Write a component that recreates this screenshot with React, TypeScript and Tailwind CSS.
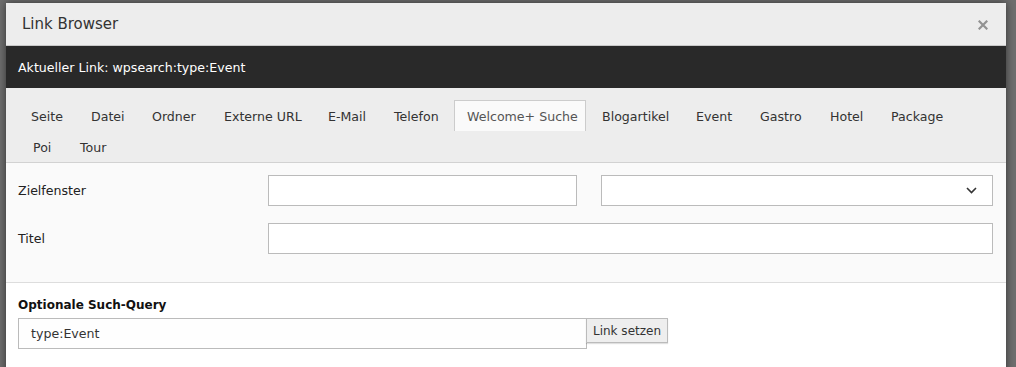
import React from "react";

const tabsRow1: [string, number][] = [
  ["Seite", 60],
  ["Datei", 61],
  ["Ordner", 72],
  ["Externe URL", 104],
  ["E-Mail", 66],
  ["Telefon", 73],
  ["Welcome+ Suche", 135],
  ["Blogartikel", 94],
  ["Event", 64],
  ["Gastro", 70],
  ["Hotel", 61],
  ["Package", 80],
];
const tabsRow2: [string, number][] = [
  ["Poi", 47],
  ["Tour", 60],
];

function Tab({ label, w, active }: { label: string; w: number; active?: boolean }) {
  if (active) {
    return (
      <div className="shrink-0 w-[135px] pr-[3px]">
        <div className="h-[31px] pl-[12px] pt-[3px] flex items-center bg-[#fafafa] border border-b-0 border-[#cccccc] text-[#555555] whitespace-nowrap">
          {label}
        </div>
      </div>
    );
  }
  return (
    <div
      className="shrink-0 h-[31px] pl-[13px] pt-[3px] flex items-center text-[#333333] whitespace-nowrap"
      style={{ width: w }}
    >
      {label}
    </div>
  );
}

export default function App() {
  return (
    <div
      className="relative w-[1016px] h-[367px] overflow-hidden bg-[#6e6e6e] pt-[3px] pl-[6px]"
      style={{ fontFamily: '"DejaVu Sans", Verdana, sans-serif' }}
    >
      <div className="w-[1000px] h-[400px] bg-white shadow-[0_0_8px_rgba(0,0,0,0.55)] flex flex-col">
        {/* Header */}
        <div className="h-[43px] bg-[#ededed] border-b border-[#c8c8c8] flex items-center justify-between pl-[16px] pr-[18px]">
          <span className="text-[15px] text-[#333333] pt-[1px]">Link Browser</span>
          <svg width="10" height="10" viewBox="0 0 10 10" className="mt-[1px]">
            <path d="M1.5 1.5 L8.5 8.5 M8.5 1.5 L1.5 8.5" stroke="#929292" strokeWidth="2.2" strokeLinecap="square" />
          </svg>
        </div>
        {/* Current link */}
        <div className="h-[42px] bg-[#292929] flex items-center pl-[12px] pt-[3px]">
          <span className="text-[12.6px] text-white">Aktueller Link: wpsearch:type:Event</span>
        </div>
        {/* Tabs */}
        <div className="bg-[#ededed] pt-[12px] pl-[12px] border-b border-[#d2d2d2] text-[12.6px]">
          <div className="flex">
            {tabsRow1.map(([t, w]) => (
              <Tab key={t} label={t} w={w} active={t === "Welcome+ Suche"} />
            ))}
          </div>
          <div className="flex pl-[2px]">
            {tabsRow2.map(([t, w]) => (
              <Tab key={t} label={t} w={w} />
            ))}
          </div>
        </div>
        {/* Form */}
        <div className="bg-[#fafafa] border-b border-[#dddddd] pt-[12px] pb-[28px] pl-[12px] pr-[13px] text-[12.6px] text-[#222222] flex flex-col gap-[17px]">
          <div className="flex items-center">
            <div className="w-[250px] pt-[2px]">Zielfenster</div>
            <div className="w-[309px] h-[31px] bg-white border border-[#bbbbbb]" />
            <div className="ml-[24px] flex-1 h-[31px] bg-white border border-[#bbbbbb] flex items-center justify-end pr-[15px]">
              <svg width="11" height="7" viewBox="0 0 11 7">
                <path d="M1 1 L5.5 5.5 L10 1" fill="none" stroke="#333333" strokeWidth="1.6" />
              </svg>
            </div>
          </div>
          <div className="flex items-center">
            <div className="w-[250px] pt-[2px]">Titel</div>
            <div className="flex-1 h-[31px] bg-white border border-[#bbbbbb]" />
          </div>
        </div>
        {/* Query */}
        <div className="bg-white pl-[12px] pt-[15px] text-[12.6px]">
          <div className="font-bold text-[12px] text-[#111111] leading-[15px]">Optionale Such-Query</div>
          <div className="flex items-start mt-[5px]">
            <div className="w-[569px] h-[31px] border border-[#bbbbbb] bg-[#fefefe] flex items-center pl-[12px] pt-[2px] text-[#333333]">
              type:Event
            </div>
            <div className="h-[25px] w-[82px] -ml-px bg-[#eeeeee] border border-[#bbbbbb] shadow-[0_1px_1px_rgba(0,0,0,0.12)] flex items-center justify-center pt-[1px] text-[#333333] text-[12px]">
              Link setzen
            </div>
          </div>
        </div>
      </div>
    </div>
  );
}
